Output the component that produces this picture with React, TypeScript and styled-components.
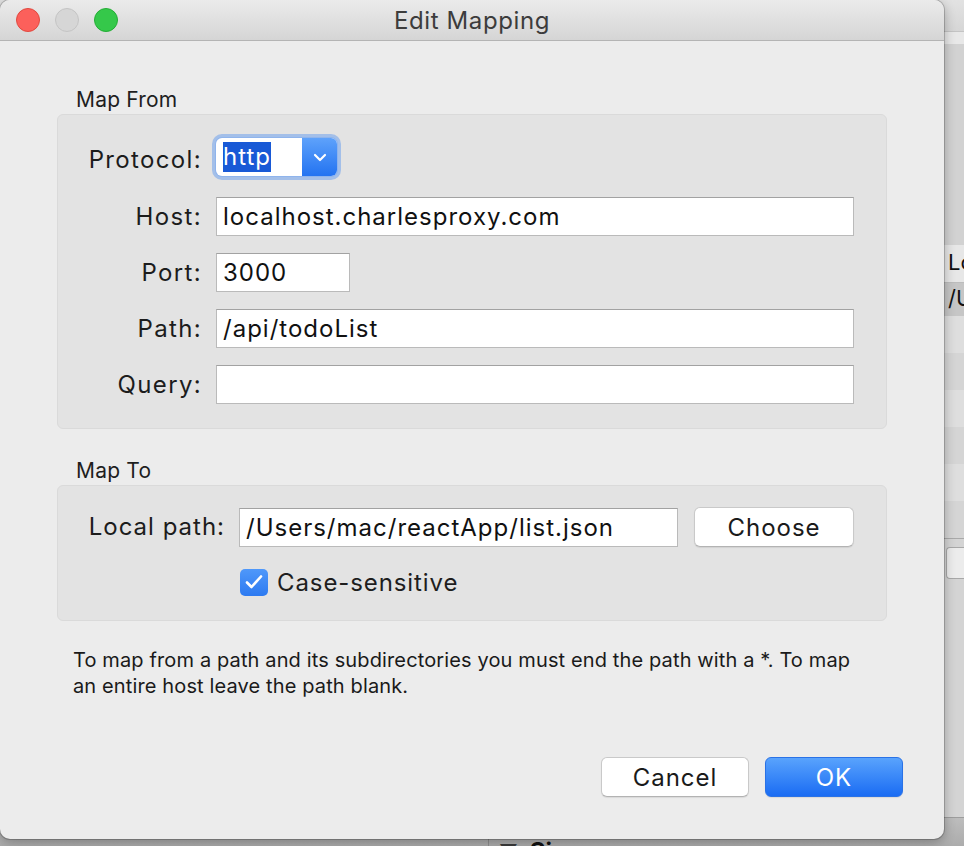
import styled, { createGlobalStyle } from 'styled-components';

const GlobalStyle = createGlobalStyle`
  html, body {
    margin: 0;
    padding: 0;
  }
  body {
    font-family: Inter, "Liberation Sans", Arial, sans-serif;
    color: #1a1a1a;
    background: #cfcfcf;
  }
`;

const Desktop = styled.div`
  position: relative;
  width: 964px;
  height: 846px;
  overflow: hidden;
`;

/* ---------- background app, mostly hidden behind the dialog ---------- */

const BgApp = styled.div`
  display: flex;
  flex-direction: column;
  width: 100%;
  height: 100%;
  background: #d3d3d3;
`;

const BgTitle = styled.div`
  height: 31px;
  background: linear-gradient(#e2e2e2, #d6d6d6);
  border-bottom: 1px solid #c4c4c4;
`;

const BgToolbar = styled.div`
  height: 12px;
  background: #e8e8e8;
`;

const BgPane = styled.div`
  height: 201px;
  background: #d2d2d2;
`;

const BgRow = styled.div<{ $tone: 'head' | 'sel' | 'a' | 'b' }>`
  display: grid;
  grid-template-columns: 944px 1fr;
  height: ${(p) => (p.$tone === 'sel' ? 33 : 37)}px;
  align-items: center;
  background: ${(p) =>
    p.$tone === 'head' ? '#e7e7e7' : p.$tone === 'sel' ? '#c6c6c6' : p.$tone === 'a' ? '#dedede' : '#d5d5d5'};
  border-bottom: ${(p) => (p.$tone === 'head' ? '1px solid #bdbdbd' : 'none')};
  font-size: 22px;
  color: #111;
  white-space: nowrap;
  overflow: hidden;
`;

const BgCell = styled.span`
  padding-left: 4px;
  margin-top: -3px;
`;

const BgLower = styled.div`
  flex: 1;
  display: grid;
  grid-template-columns: 944px 1fr;
  align-content: start;
  padding-top: 8px;
  border-top: 1px solid #a9a9a9;
  background: #d4d4d4;
`;

const BgButton = styled.div`
  grid-column: 2;
  height: 30px;
  margin-left: 2px;
  border: 1px solid #a8a8a8;
  border-right: none;
  border-radius: 4px 0 0 4px;
  background: #ececec;
`;

const StatusBar = styled.div`
  height: 28px;
  display: grid;
  grid-template-columns: 488px 1fr;
  background: linear-gradient(#bdbdbd, #acacac);
  border-top: 1px solid #9d9d9d;
  overflow: hidden;
`;

const StatusHead = styled.div`
  grid-column: 2;
  display: flex;
  align-items: flex-start;
  gap: 12px;
  padding: 19px 0 0 10px;
  border-left: 1px solid #8f8f8f;
  font-size: 24px;
  font-weight: 700;
  color: #111;
`;

const Triangle = styled.span`
  font-size: 18px;
  color: #3b3b3b;
  line-height: 1.6;
`;

/* ---------- dialog window ---------- */

const Window = styled.div`
  position: absolute;
  top: 0;
  left: 0;
  width: 944px;
  height: 839px;
  display: flex;
  flex-direction: column;
  background: #ececec;
  border-radius: 10px;
  overflow: hidden;
  box-shadow:
    0 0 0 1px rgba(0, 0, 0, 0.18),
    0 3px 12px rgba(0, 0, 0, 0.3);
`;

const TitleBar = styled.div`
  height: 40px;
  display: grid;
  grid-template-columns: 1fr auto 1fr;
  align-items: center;
  padding: 0 16px;
  background: linear-gradient(#ebebeb, #d5d5d5);
  border-bottom: 1px solid #b4b4b4;
`;

const Lights = styled.div`
  display: flex;
  gap: 15px;
`;

const Light = styled.span<{ $color: string; $edge: string }>`
  width: 24px;
  height: 24px;
  border-radius: 50%;
  box-sizing: border-box;
  background: ${(p) => p.$color};
  border: 1px solid ${(p) => p.$edge};
`;

const Title = styled.div`
  font-size: 24px;
  letter-spacing: 0.6px;
  color: #3c3c3c;
`;

const Body = styled.div`
  display: flex;
  flex-direction: column;
  padding: 0 57px;
`;

const SectionLabel = styled.div<{ $top: number }>`
  margin-top: ${(p) => p.$top}px;
  margin-bottom: 1px;
  padding-left: 19px;
  height: 26px;
  line-height: 26px;
  font-size: 21px;
  letter-spacing: 0.2px;
  color: #1e1e1e;
`;

const Group = styled.div<{ $label: number; $gap: number; $pad: string }>`
  display: grid;
  grid-template-columns: ${(p) => p.$label}px 1fr;
  column-gap: 14px;
  row-gap: ${(p) => p.$gap}px;
  padding: ${(p) => p.$pad};
  background: #e3e3e3;
  border: 1px solid #dadada;
  border-radius: 6px;
`;

const Label = styled.div<{ $h?: number; $track?: number }>`
  height: ${(p) => p.$h ?? 39}px;
  display: flex;
  align-items: center;
  justify-content: flex-end;
  font-size: 24px;
  letter-spacing: ${(p) => p.$track ?? 1.35}px;
  color: #1c1c1c;
  white-space: nowrap;
`;

const Field = styled.div<{ $w?: number }>`
  box-sizing: border-box;
  height: 39px;
  width: ${(p) => (p.$w ? `${p.$w}px` : 'auto')};
  display: flex;
  align-items: center;
  padding-left: 6px;
  background: #fff;
  border: 1px solid #bababa;
  border-top-color: #a2a2a2;
  font-size: 24px;
  letter-spacing: 1px;
  color: #111;
  white-space: nowrap;
  overflow: hidden;
`;

const Popup = styled.div`
  box-sizing: border-box;
  width: 121px;
  height: 38px;
  display: flex;
  border-radius: 6px;
  background: #fff;
  box-shadow:
    0 0 0 1px #8fb4ec,
    0 0 0 4px rgba(84, 146, 240, 0.45);
`;

const PopupValue = styled.div`
  flex: 1;
  display: flex;
  align-items: center;
  padding-left: 7px;
`;

const Selected = styled.span`
  height: 30px;
  line-height: 30px;
  background: #1859d6;
  color: #fff;
  font-size: 24px;
  letter-spacing: 1px;
`;

const PopupArrow = styled.div`
  width: 35px;
  display: grid;
  place-items: center;
  border-radius: 0 6px 6px 0;
  background: linear-gradient(#5ea2fb, #2373f1);
`;

const Row = styled.div<{ $h: number }>`
  height: ${(p) => p.$h}px;
  display: flex;
  align-items: flex-start;
`;

const FieldLine = styled.div`
  display: flex;
  gap: 16px;
  align-items: center;
`;

const PathField = styled(Field)`
  flex: 1;
`;

const PlainButton = styled.div<{ $w: number }>`
  box-sizing: border-box;
  width: ${(p) => p.$w}px;
  height: 40px;
  display: grid;
  place-items: center;
  background: #fff;
  border: 1px solid #c9c9c9;
  border-bottom-color: #b3b3b3;
  border-radius: 6px;
  box-shadow: 0 1px 1px rgba(0, 0, 0, 0.08);
  font-size: 24px;
  letter-spacing: 1px;
  color: #1a1a1a;
`;

const PrimaryButton = styled(PlainButton)`
  background: linear-gradient(#59a3fd, #1a6cf3);
  border: 1px solid #2a72e6;
  color: #fff;
`;

const CheckLine = styled.div`
  grid-column: 2;
  display: flex;
  align-items: center;
  gap: 9px;
  height: 28px;
  padding-left: 1px;
`;

const CheckBox = styled.span`
  width: 28px;
  height: 27px;
  display: grid;
  place-items: center;
  border-radius: 5px;
  background: linear-gradient(#4f98fa, #2d7af1);
`;

const CheckText = styled.span`
  font-size: 24px;
  letter-spacing: 0.9px;
  color: #1e1e1e;
`;

const Help = styled.p`
  margin: 26px 0 0;
  padding-left: 16px;
  font-size: 20px;
  letter-spacing: 0.13px;
  line-height: 26px;
  color: #1a1a1a;
`;

const Buttons = styled.div`
  display: flex;
  justify-content: flex-end;
  gap: 16px;
  margin: 58px -16px 0 0;
`;

export default function App() {
  const rows: Array<'a' | 'b'> = ['a', 'b', 'a', 'b', 'a', 'b'];
  return (
    <>
      <GlobalStyle />
      <Desktop>
        <BgApp>
          <BgTitle />
          <BgToolbar />
          <BgPane />
          <BgRow $tone="head">
            <span />
            <BgCell>Location</BgCell>
          </BgRow>
          <BgRow $tone="sel">
            <span />
            <BgCell>/Users</BgCell>
          </BgRow>
          {rows.map((t, i) => (
            <BgRow key={i} $tone={t} />
          ))}
          <BgLower>
            <BgButton />
          </BgLower>
          <StatusBar>
            <StatusHead>
              <Triangle>▼</Triangle>
              <span>Size</span>
            </StatusHead>
          </StatusBar>
        </BgApp>

        <Window>
          <TitleBar>
            <Lights>
              <Light $color="#fc605b" $edge="#e0493f" />
              <Light $color="#d6d6d6" $edge="#c4c4c4" />
              <Light $color="#35c84a" $edge="#24ad36" />
            </Lights>
            <Title>Edit Mapping</Title>
            <span />
          </TitleBar>

          <Body>
            <SectionLabel $top={46}>Map From</SectionLabel>
            <Group $label={144} $gap={17} $pad="23px 32px 24px 0">
              <Label $h={42}>Protocol:</Label>
              <Row $h={42}>
                <Popup>
                  <PopupValue>
                    <Selected>http</Selected>
                  </PopupValue>
                  <PopupArrow>
                    <svg width="14" height="9" viewBox="0 0 14 9">
                      <path d="M2 2l5 5 5-5" fill="none" stroke="#fff" strokeWidth="2.2" strokeLinecap="round" strokeLinejoin="round" />
                    </svg>
                  </PopupArrow>
                </Popup>
              </Row>
              <Label>Host:</Label>
              <Field>localhost.charlesproxy.com</Field>
              <Label>Port:</Label>
              <Field $w={134}>3000</Field>
              <Label>Path:</Label>
              <Field>/api/todoList</Field>
              <Label>Query:</Label>
              <Field />
            </Group>

            <SectionLabel $top={29}>Map To</SectionLabel>
            <Group $label={167} $gap={21} $pad="21px 32px 24px 0">
              <Label $track={1}>Local path:</Label>
              <FieldLine>
                <PathField>/Users/mac/reactApp/list.json</PathField>
                <PlainButton $w={160}>Choose</PlainButton>
              </FieldLine>
              <CheckLine>
                <CheckBox>
                  <svg width="20" height="18" viewBox="0 0 20 18">
                    <path d="M3 9.5l4.5 4.5L17 3.5" fill="none" stroke="#fff" strokeWidth="2.6" strokeLinecap="round" strokeLinejoin="round" />
                  </svg>
                </CheckBox>
                <CheckText>Case-sensitive</CheckText>
              </CheckLine>
            </Group>

            <Help>
              To map from a path and its subdirectories you must end the path with a *. To map
              <br />
              an entire host leave the path blank.
            </Help>

            <Buttons>
              <PlainButton $w={148}>Cancel</PlainButton>
              <PrimaryButton $w={138}>OK</PrimaryButton>
            </Buttons>
          </Body>
        </Window>
      </Desktop>
    </>
  );
}
